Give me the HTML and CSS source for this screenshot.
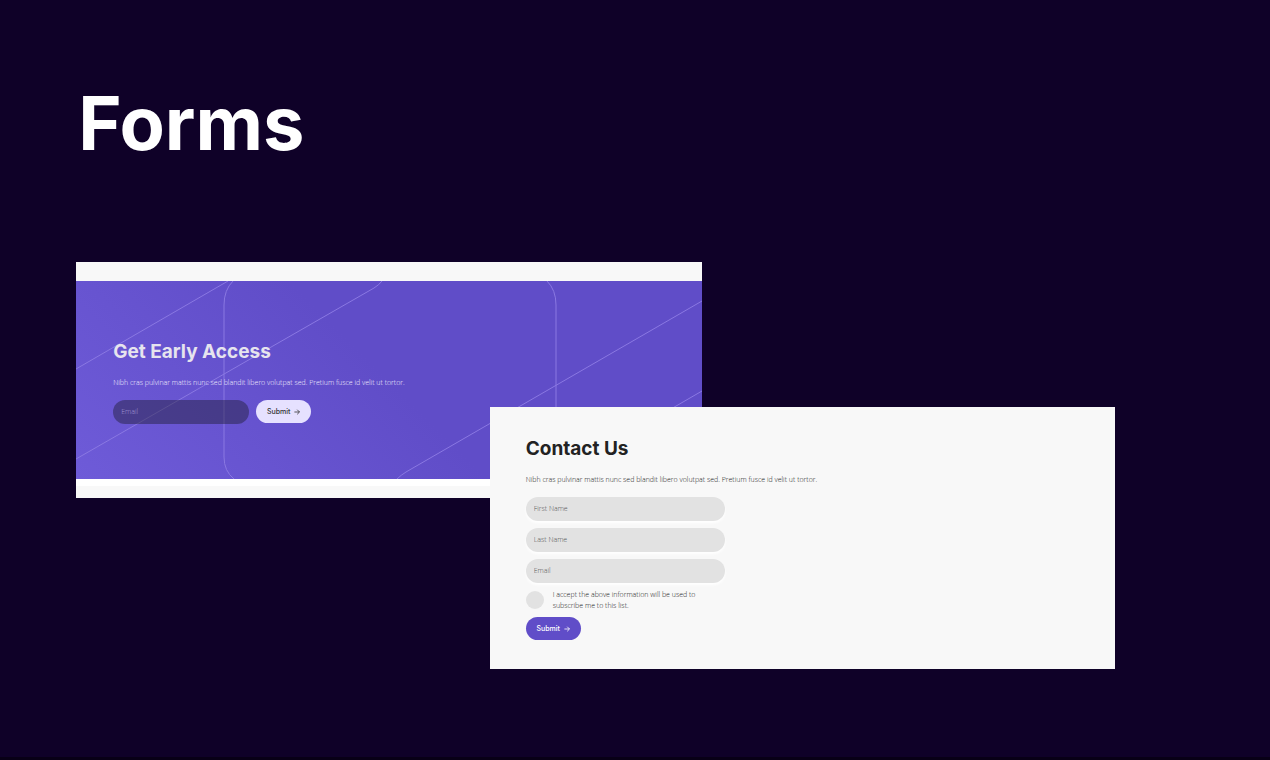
FILE: index.html
```html
<!DOCTYPE html>
<html lang="en">
<head>
<meta charset="utf-8">
<meta name="viewport" content="width=device-width, initial-scale=1">
<title>Forms</title>
<link rel="stylesheet" href="styles.css">
</head>
<body>
<main class="page">
  <h1 class="page-title">Forms</h1>
  <div class="showcase">
    <section class="card card-access">
      <div class="hero">
        <svg class="hero-lines" viewBox="0 0 626 198" preserveAspectRatio="xMinYMin slice" aria-hidden="true">
          <path d="M0 88 152 0M157 0Q148 9 148 24V176Q148 190 158 198M471 0Q480 9 480 24V198M306 0Q303 4 298 7L0 178M626 20 330 191Q325 194 321 198M626 110 474 198"/>
        </svg>
        <form class="form">
          <h2 class="heading">Get Early Access</h2>
          <p class="lead">Nibh cras pulvinar mattis nunc sed blandit libero volutpat sed. Pretium fusce id velit ut tortor.</p>
          <div class="inline-fields">
            <input class="field" type="email" placeholder="Email" aria-label="Email">
            <button class="button button-light" type="button">Submit
              <svg class="arrow" viewBox="0 0 6 6" aria-hidden="true"><path d="M.4 3H5.5M3.2 .7 5.5 3 3.2 5.3"/></svg>
            </button>
          </div>
        </form>
      </div>
    </section>
    <section class="card card-contact">
      <form class="form">
        <h2 class="heading">Contact Us</h2>
        <p class="lead">Nibh cras pulvinar mattis nunc sed blandit libero volutpat sed. Pretium fusce id velit ut tortor.</p>
        <div class="stacked-fields">
          <input class="field" type="text" placeholder="First Name" aria-label="First Name">
          <input class="field" type="text" placeholder="Last Name" aria-label="Last Name">
          <input class="field" type="email" placeholder="Email" aria-label="Email">
        </div>
        <label class="consent" for="consent">
          <input class="consent-box" id="consent" type="checkbox">
          <span>I accept the above information will be used to subscribe me to this list.</span>
        </label>
        <button class="button button-primary" type="button">Submit
          <svg class="arrow" viewBox="0 0 6 6" aria-hidden="true"><path d="M.4 3H5.5M3.2 .7 5.5 3 3.2 5.3"/></svg>
        </button>
      </form>
    </section>
  </div>
</main>
</body>
</html>
```
FILE: styles.css
```css
* { box-sizing: border-box; }

body {
  margin: 0;
  background: #0f0128;
  font-family: "Open Sans", "Noto Sans", sans-serif;
}

.page {
  min-height: 100vh;
  padding: 71px 12.2% 72px 6%;
  border-bottom: 3px solid #080016;
}

.page-title {
  margin: 0 0 87px;
  padding-left: 2px;
  color: #fff;
  font-family: Inter, sans-serif;
  font-size: 74px;
  font-weight: 700;
  line-height: 104px;
}

.showcase {
  display: flex;
  flex-direction: column;
}

.card {
  width: 60.2%;
  background: #f8f8f8;
}

.card-access {
  padding: 19px 0 12px;
}

.card-contact {
  position: relative;
  align-self: flex-end;
  margin-top: -91px;
  padding: 30px 36px 29px;
}

.hero {
  position: relative;
  padding: 59px 37px 55px;
  border-bottom: 7px solid #fff;
  background: linear-gradient(45deg, #6e5bd8, #604dc8 50%);
}

.hero-lines {
  position: absolute;
  inset: 0;
  width: 100%;
  height: 100%;
  fill: none;
  stroke: #8a78e2;
  stroke-width: 1;
}

.form {
  position: relative;
}

.heading {
  margin: 0;
  color: #222;
  font: 700 19px/24px Inter, sans-serif;
}

.lead {
  margin: 13px 0 11px;
  color: #222;
  font-size: 7px;
  font-weight: 300;
  line-height: 12px;
}

.hero .heading { color: #e6e4ee; }
.hero .lead { color: #f2efff; }

.inline-fields {
  display: flex;
  gap: 7px;
}

.inline-fields .field { width: 136px; }

.stacked-fields {
  display: flex;
  flex-direction: column;
  gap: 7px;
  width: 199px;
}

.field {
  width: 100%;
  height: 24px;
  padding: 0 8px 1px;
  border: 0;
  border-radius: 12px;
  background: #e2e2e2;
  box-shadow: 0 2px 3px #fff;
  color: #444;
  font: 300 7px/12px "Open Sans", "Noto Sans", sans-serif;
}

.field::placeholder {
  color: #555;
  opacity: 1;
}

.hero .field {
  background: rgba(32, 28, 50, 0.45);
  box-shadow: none;
}

.hero .field::placeholder { color: #a296d4; }

.consent {
  display: flex;
  align-items: center;
  gap: 9px;
  width: 190px;
  margin: 6px 0;
  color: #222;
  font-size: 7px;
  font-weight: 300;
  line-height: 11px;
}

.consent-box {
  flex: none;
  appearance: none;
  width: 18px;
  height: 18px;
  margin: 0;
  border-radius: 50%;
  background: #e2e2e2;
}

.consent-box:checked { background: #604dc8; }

.button {
  display: flex;
  align-items: center;
  justify-content: center;
  gap: 4px;
  width: 55px;
  height: 23px;
  padding: 0;
  border: 0;
  border-radius: 12px;
  font: 500 7px/12px Inter, sans-serif;
}

.button-light {
  background: #e6e1ff;
  color: #333;
}

.button-primary {
  background: #604dc8;
  color: #fff;
}

.arrow {
  width: 6px;
  height: 6px;
  fill: none;
  stroke: currentColor;
  stroke-width: 0.8;
}
```
